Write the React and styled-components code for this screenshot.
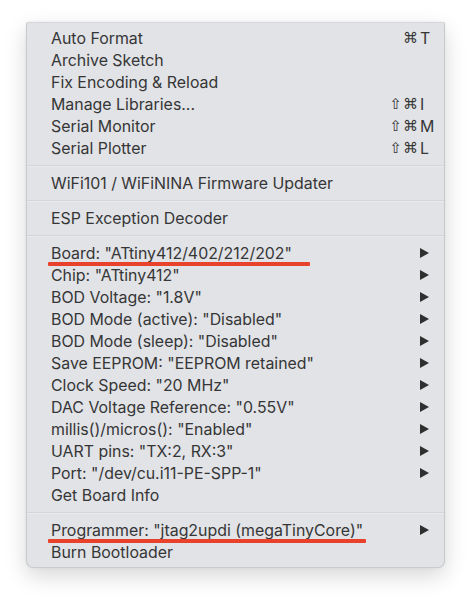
import styled, { createGlobalStyle } from "styled-components";

const GlobalStyle = createGlobalStyle`
  html, body {
    margin: 0;
    padding: 0;
    background: #ffffff;
  }
`;

const Page = styled.div`
  width: 471px;
  height: 600px;
  padding: 22px 0 0 26px;
  box-sizing: border-box;
  overflow: hidden;
`;

const Menu = styled.div`
  position: relative;
  width: 419px;
  box-sizing: border-box;
  padding: 4px 0 4px;
  background: #e1e3e7;
  border: 1px solid #c9cacd;
  border-top-color: #d6d7da;
  border-radius: 2px 2px 7px 7px;
  box-shadow: 0 8px 22px rgba(0, 0, 0, 0.16), 0 0 3px rgba(0, 0, 0, 0.06);
  font-family: Inter, "Liberation Sans", Arial, sans-serif;
  font-size: 15.9px;
  color: #363636;
`;

const Item = styled.div`
  position: relative;
  display: flex;
  align-items: center;
  height: 22px;
  padding: 0 14px 0 24px;
`;

const Label = styled.span`
  flex: 1;
  white-space: nowrap;
`;

const Shortcut = styled.span`
  display: flex;
  align-items: center;
  margin-right: -4px;
`;

const Mods = styled.span`
  font-family: "DejaVu Sans", sans-serif;
  font-size: 15px;
  letter-spacing: 1px;
`;

const Key = styled.span`
  width: 14px;
  margin-left: 1px;
`;

const Arrow = styled.span`
  width: 0;
  height: 0;
  margin-right: 1px;
  border-top: 5px solid transparent;
  border-bottom: 5px solid transparent;
  border-left: 9px solid #2f2f2f;
`;

const Separator = styled.div`
  height: 2px;
  margin: 6px 0 5px;
  background: #d3d5d9;
  border-bottom: 1px solid #e9eaed;
  box-sizing: border-box;
`;

const Mark = styled.div`
  position: absolute;
  left: 21px;
  top: 20px;
  height: 4px;
  width: ${({ $width }) => $width}px;
  background: #e8412c;
  border-radius: 1px;
`;

const groups = [
  [
    { label: "Auto Format", mods: "⌘", key: "T" },
    { label: "Archive Sketch" },
    { label: "Fix Encoding & Reload" },
    { label: "Manage Libraries...", mods: "⇧⌘", key: "I" },
    { label: "Serial Monitor", mods: "⇧⌘", key: "M" },
    { label: "Serial Plotter", mods: "⇧⌘", key: "L" },
  ],
  [{ label: "WiFi101 / WiFiNINA Firmware Updater" }],
  [{ label: "ESP Exception Decoder" }],
  [
    { label: 'Board: "ATtiny412/402/212/202"', sub: true, mark: 262 },
    { label: 'Chip: "ATtiny412"', sub: true },
    { label: 'BOD Voltage: "1.8V"', sub: true },
    { label: 'BOD Mode (active): "Disabled"', sub: true },
    { label: 'BOD Mode (sleep): "Disabled"', sub: true },
    { label: 'Save EEPROM: "EEPROM retained"', sub: true },
    { label: 'Clock Speed: "20 MHz"', sub: true },
    { label: 'DAC Voltage Reference: "0.55V"', sub: true },
    { label: 'millis()/micros(): "Enabled"', sub: true },
    { label: 'UART pins: "TX:2, RX:3"', sub: true },
    { label: 'Port: "/dev/cu.i11-PE-SPP-1"', sub: true },
    { label: "Get Board Info" },
  ],
  [
    { label: 'Programmer: "jtag2updi (megaTinyCore)"', sub: true, mark: 318 },
    { label: "Burn Bootloader" },
  ],
];

const MenuItem = ({ item }) => (
  <Item>
    <Label>{item.label}</Label>
    {item.key && (
      <Shortcut>
        <Mods>{item.mods}</Mods>
        <Key>{item.key}</Key>
      </Shortcut>
    )}
    {item.sub && <Arrow />}
    {item.mark && <Mark $width={item.mark} />}
  </Item>
);

export default function App() {
  return (
    <Page>
      <GlobalStyle />
      <Menu>
        {groups.map((group, i) => (
          <div key={i}>
            {i > 0 && <Separator />}
            {group.map((item) => (
              <MenuItem key={item.label} item={item} />
            ))}
          </div>
        ))}
      </Menu>
    </Page>
  );
}
